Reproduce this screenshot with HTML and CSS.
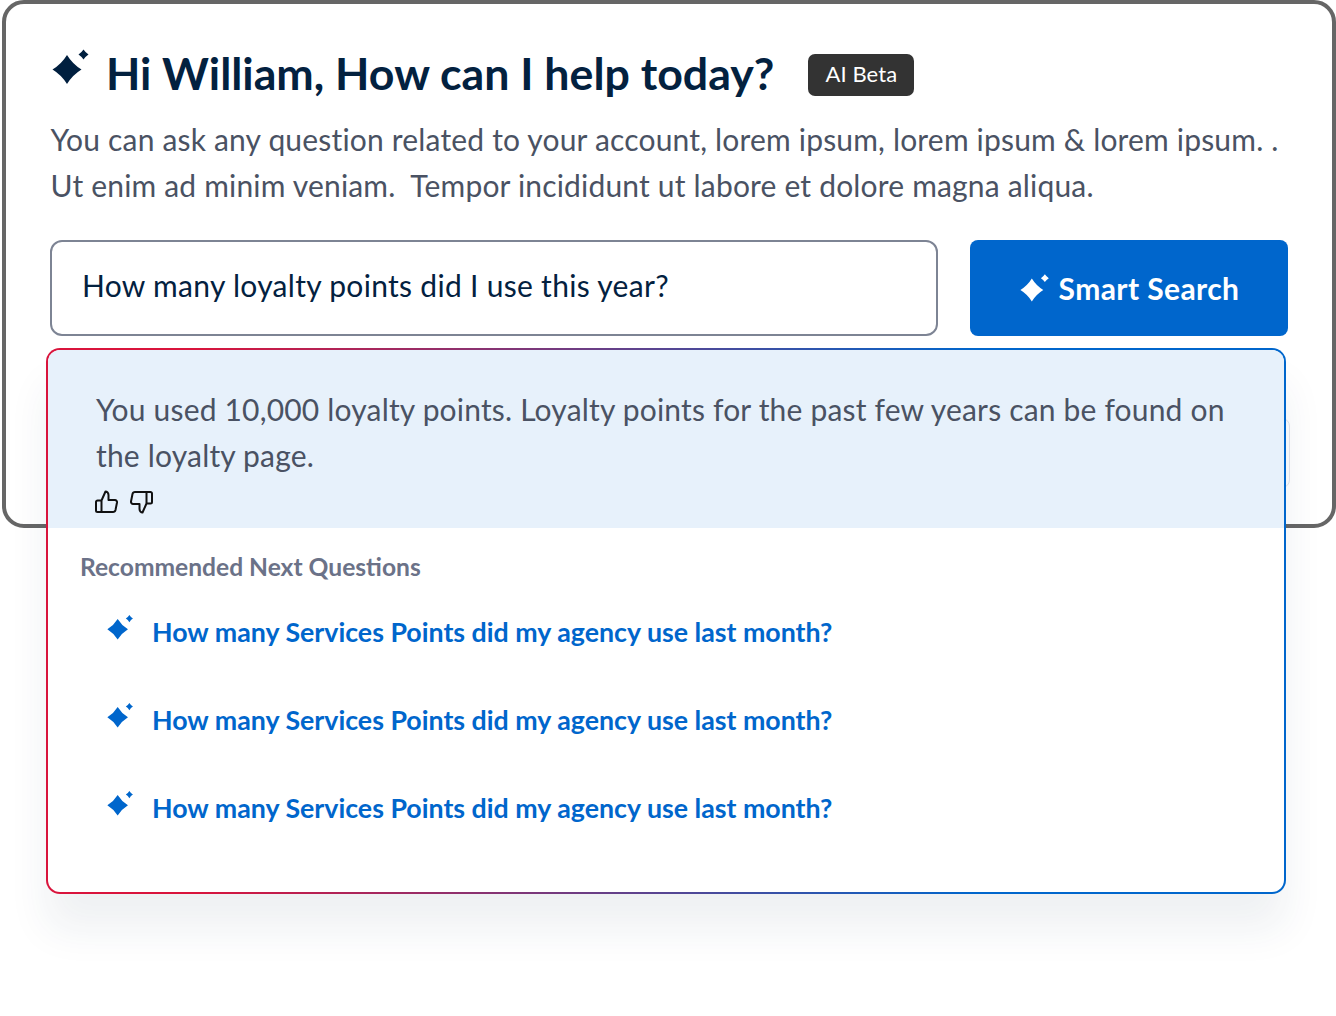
FILE: index.html
```html
<!DOCTYPE html>
<html lang="en">
	<head>
		<meta charset="UTF-8" />
		<meta name="viewport" content="width=device-width, initial-scale=1.0" />
		<title>Smart Search</title>
		<link rel="stylesheet" href="styles.css">
	</head>
	<body>
		<svg class="defs" width="0" height="0" aria-hidden="true">
			<symbol id="sparkle" viewBox="0 0 38 38">
				<path d="M15 7Q20.500 16 29.500 21.500Q20.500 27 15 36Q9.500 27 .5 21.500Q9.500 16 15 7Z"/>
				<path d="M31.500 1.500Q33.500 4.500 36.500 6.500Q33.500 8.500 31.500 11.500Q29.500 8.500 26.500 6.500Q29.500 4.500 31.500 1.500Z"/>
			</symbol>
		</svg>

		<div class="card">
			<div class="heading">
				<svg class="sparkle sparkle-title"><use href="#sparkle"/></svg>
				<h1 class="title">Hi William, How can I help today?</h1>
				<span class="badge">AI Beta</span>
			</div>
			<p class="intro">
				You can ask any question related to your account, lorem ipsum, lorem ipsum &amp; lorem ipsum. .<br>
				Ut enim ad minim veniam.&nbsp; Tempor incididunt ut labore et dolore magna aliqua.
			</p>
			<div class="search">
				<div class="search-input">How many loyalty points did I use this year?</div>
				<button class="search-button">
					<svg class="sparkle sparkle-button"><use href="#sparkle"/></svg>
					Smart Search
				</button>
			</div>
			<div class="hidden-chip"></div>
		</div>

		<div class="panel">
			<div class="answer">
				<p class="answer-text">You used 10,000 loyalty points. Loyalty points for the past few years can be found on the loyalty page.</p>
				<div class="feedback">
					<svg class="thumb" viewBox="0 0 24 24"><path d="M7.500 10.500H3.500C2.700 10.500 2 11.200 2 12V20.500C2 21.300 2.700 22 3.500 22H19C20.200 22 21.200 21.200 21.500 20L23 12.500C23.200 11.300 22.300 10 21 10H14.500V5C14.500 3 13 1.500 11.500 1.500L7.500 10.500V22"/></svg>
					<svg class="thumb" viewBox="0 0 24 24"><path d="M16.500 13.500H20.500C21.300 13.500 22 12.800 22 12V3.500C22 2.700 21.300 2 20.500 2H5C3.800 2 2.800 2.800 2.500 4L1 11.500C.8 12.700 1.700 14 3 14H9.500V19C9.500 21 11 22.500 12.500 22.500L16.500 13.500V2"/></svg>
				</div>
			</div>
			<div class="next">
				<h2 class="next-title">Recommended Next Questions</h2>
				<ul class="next-list">
					<li class="next-item"><svg class="sparkle sparkle-item"><use href="#sparkle"/></svg><a href="#">How many Services Points did my agency use last month?</a></li>
					<li class="next-item"><svg class="sparkle sparkle-item"><use href="#sparkle"/></svg><a href="#">How many Services Points did my agency use last month?</a></li>
					<li class="next-item"><svg class="sparkle sparkle-item"><use href="#sparkle"/></svg><a href="#">How many Services Points did my agency use last month?</a></li>
				</ul>
			</div>
		</div>
	</body>
</html>
```

FILE: styles.css
```css
html, body {
	margin: 0;
	background: #fff;
}
body {
	position: relative;
	height: 1016px;
	overflow: hidden;
	font-family: Lato, "Open Sans", sans-serif;
}
.defs {
	position: absolute;
}
.sparkle {
	display: block;
	flex: none;
	fill: currentColor;
}

.card {
	position: relative;
	box-sizing: border-box;
	width: 1334px;
	height: 528px;
	margin-left: 2px;
	padding: 39px 44px 0;
	border: 4px solid #666;
	border-radius: 22px;
	background: #fff;
}
.heading {
	display: flex;
	align-items: center;
	height: 60px;
}
.sparkle-title {
	width: 38px;
	height: 38px;
	margin: -12px 16px 0 2px;
	color: #001f3f;
}
.title {
	margin: 0;
	font-size: 44.700px;
	font-weight: 700;
	color: #03213f;
}
.badge {
	margin: 4px 0 0 34px;
	padding: 0 17px;
	width: 72px;
	height: 42px;
	line-height: 40px;
	border-radius: 7px;
	background: #333;
	color: #fff;
	font-size: 22px;
	letter-spacing: 0.1px;
	white-space: nowrap;
}
.intro {
	margin: 13px 0 0 0.500px;
	font-size: 30px;
	line-height: 46px;
	letter-spacing: 0.18px;
	color: #4a5263;
}
.search {
	display: flex;
	gap: 32px;
	margin-top: 32px;
}
.search-input {
	box-sizing: border-box;
	width: 888px;
	height: 96px;
	padding: 0 30px;
	line-height: 87px;
	border: 2px solid #7d8494;
	border-radius: 12px;
	font-size: 30px;
	letter-spacing: 0.3px;
	color: #03213f;
}
.search-button {
	display: flex;
	align-items: center;
	justify-content: center;
	width: 318px;
	height: 96px;
	padding: 0 0 1px 1px;
	border: 0;
	border-radius: 8px;
	background: #0066cc;
	color: #fff;
	font: 700 30px Lato, "Open Sans", sans-serif;
	letter-spacing: 0.4px;
}
.sparkle-button {
	width: 30px;
	height: 30px;
	margin-right: 9px;
}
.hidden-chip {
	position: absolute;
	top: 414px;
	right: 42px;
	width: 40px;
	height: 68px;
	border: 1px solid #e1e5ee;
	border-radius: 8px;
}

.panel {
	position: absolute;
	top: 348px;
	left: 46px;
	box-sizing: border-box;
	width: 1240px;
	height: 546px;
	border: 2px solid transparent;
	border-radius: 14px;
	background:
		linear-gradient(#fff, #fff) padding-box,
		linear-gradient(90deg, #d9143c 12%, #0066cc 75%) border-box;
	box-shadow: 0 36px 40px rgba(30, 50, 90, 0.07);
	overflow: hidden;
}
.answer {
	box-sizing: border-box;
	height: 178px;
	padding: 36px 48px 0;
	background: #e7f1fb;
}
.answer-text {
	margin: 0;
	font-size: 30px;
	line-height: 46px;
	letter-spacing: 0.18px;
	color: #4a5263;
}
.feedback {
	display: flex;
	gap: 12px;
	margin: 12px 0 0 -2px;
}
.thumb {
	width: 24px;
	height: 24px;
	fill: none;
	stroke: #111;
	stroke-width: 2;
	stroke-linejoin: round;
}
.next {
	padding: 23px 32px 0;
}
.next-title {
	margin: 0;
	font-size: 24.600px;
	font-weight: 700;
	line-height: 32px;
	color: #6b7288;
}
.next-list {
	margin: 5px 0 0;
	padding: 0 0 0 27px;
	list-style: none;
}
.next-item {
	display: flex;
	align-items: center;
	height: 88px;
	color: #0066cc;
}
.sparkle-item {
	width: 27px;
	height: 27px;
	margin: -10px 18px 0 0;
}
.next-item a {
	color: inherit;
	font-size: 26.750px;
	font-weight: 700;
	text-decoration: none;
}
```
